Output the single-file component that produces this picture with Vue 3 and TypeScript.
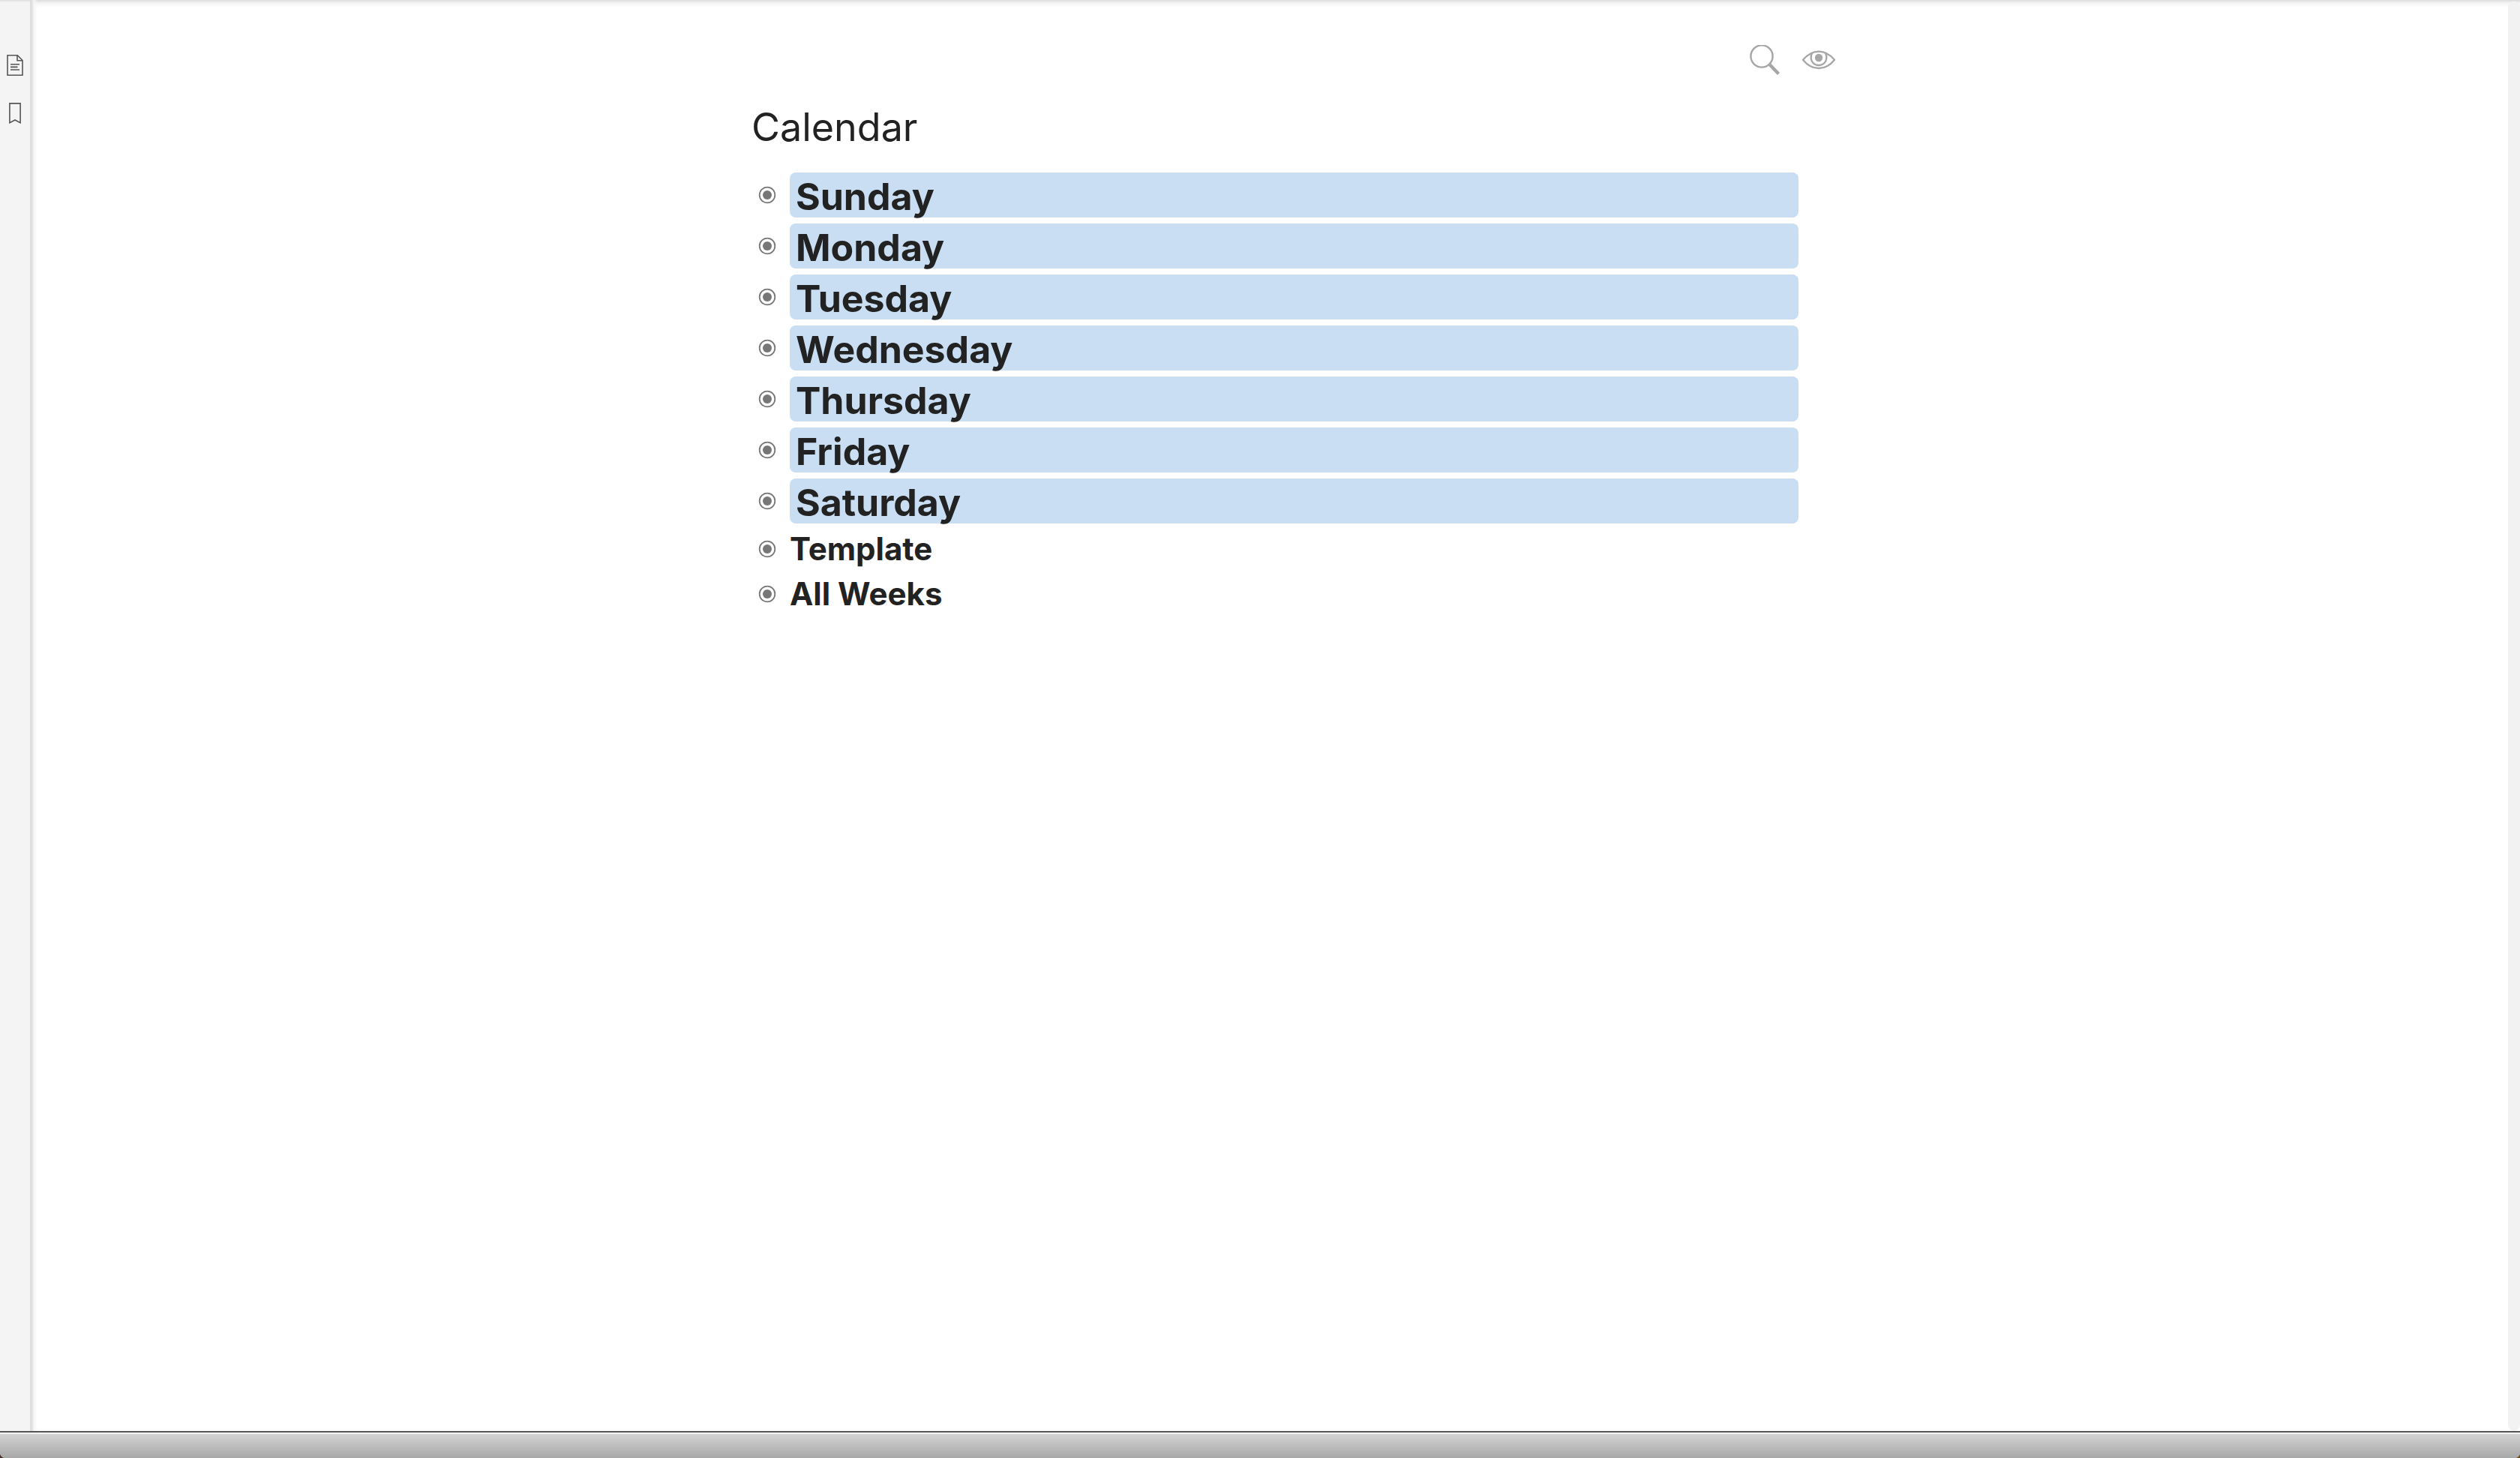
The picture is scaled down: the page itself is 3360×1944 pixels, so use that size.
<script setup lang="ts">
interface Item {
  name: string
  highlighted: boolean
}

const days = ['Sunday', 'Monday', 'Tuesday', 'Wednesday', 'Thursday', 'Friday', 'Saturday']
const items: Item[] = [
  ...days.map((name) => ({ name, highlighted: true })),
  { name: 'Template', highlighted: false },
  { name: 'All Weeks', highlighted: false },
]
</script>

<template>
  <div class="window">
    <div class="body">
      <nav class="sidebar">
        <button class="icon-button" type="button" aria-label="Documents">
          <svg width="24" height="30" viewBox="0 0 24 30" fill="none" stroke="#555" stroke-width="1.6">
            <path d="M2 1.8H15.3L22 8.5V28.2H2Z" />
            <path d="M15 2V8.8H22" />
            <path d="M6 13.8H18M6 17.4H15.5M6 21H18" />
          </svg>
        </button>
        <button class="icon-button" type="button" aria-label="Bookmarks">
          <svg width="18" height="30" viewBox="0 0 18 30" fill="none" stroke="#555" stroke-width="1.6">
            <path d="M1.9 1.9H16.1V27.6L9 24L1.9 27.6Z" />
          </svg>
        </button>
      </nav>
      <main class="page">
        <div class="toolbar">
          <button class="icon-button" type="button" aria-label="Search">
            <svg width="42" height="42" viewBox="0 0 42 42" fill="none" stroke="#a6a6a6">
              <circle cx="17" cy="15" r="14.6" stroke-width="2.4" />
              <path d="M27 25.5L39.5 38.5" stroke-width="4.4" />
            </svg>
          </button>
          <button class="icon-button" type="button" aria-label="Visibility">
            <svg width="46" height="42" viewBox="0 0 46 42" fill="none" stroke="#a6a6a6" stroke-width="2.3">
              <path d="M2 19.7C8 12.7 15 8.6 23 8.6S38 12.7 44 19.7C38 27.2 31 31 23 31S8 27.2 2 19.7Z" stroke-linejoin="round" />
              <path d="M14.3 10.4C11.5 15.4 12.4 20.9 15.5 24C19.5 28 26.5 28 30.5 24C33.6 20.9 34.5 15.4 31.7 10.4" />
              <circle cx="23" cy="17" r="5.2" fill="#a6a6a6" stroke="none" />
            </svg>
          </button>
        </div>
        <section class="content">
          <h1 class="title">Calendar</h1>
          <ul class="list">
            <li v-for="item in items" :key="item.name" class="row" :class="{ day: item.highlighted }">
              <a class="bullet" href="#" :aria-label="`Open ${item.name}`">
                <svg width="24" height="24" viewBox="0 0 24 24">
                  <circle cx="12" cy="12" r="10.3" fill="none" stroke="#777" stroke-width="1.8" />
                  <circle cx="12" cy="12" r="6" fill="#777" />
                </svg>
              </a>
              <span class="name">{{ item.name }}</span>
            </li>
          </ul>
        </section>
      </main>
      <div class="scrollbar"></div>
    </div>
    <footer class="status"></footer>
  </div>
</template>

<style>
body {
  margin: 0;
}
</style>

<style scoped>
.window {
  display: flex;
  flex-direction: column;
  min-height: 100vh;
  background: #fff;
  color: #222;
  font-family: Inter, "Liberation Sans", sans-serif;
}

.body {
  position: relative;
  display: flex;
  flex: 1;
  background: linear-gradient(#dcdcdc, #f4f4f4 4px, #fff 10px);
}

.sidebar {
  display: flex;
  flex-direction: column;
  align-items: center;
  gap: 34px;
  width: 40px;
  padding-top: 72px;
  box-sizing: border-box;
  background: linear-gradient(#dcdcdc, #f4f4f4 3px);
}

.icon-button {
  display: block;
  padding: 0;
  border: 0;
  background: none;
  cursor: pointer;
}

.icon-button svg,
.bullet svg {
  display: block;
}

.page {
  flex: 1;
  background: linear-gradient(to right, #dcdcdc, #e2e2e2 3px, #f6f6f6 5px, rgba(255, 255, 255, 0) 10px);
}

.toolbar {
  display: flex;
  justify-content: flex-end;
  gap: 28px;
  width: 1496px;
  max-width: 100%;
  margin: 0 auto;
  padding-top: 60px;
}

.content {
  width: 1396px;
  max-width: 100%;
  margin: 0 auto;
}

.title {
  margin: 0;
  padding: 36px 0 24px;
  font-size: 52px;
  font-weight: 400;
  line-height: 64px;
}

.list {
  margin: 0;
  padding: 0;
  list-style: none;
}

.row {
  display: flex;
  align-items: center;
  height: 60px;
  font-size: 42px;
  font-weight: 700;
  line-height: 60px;
}

.bullet {
  width: 42px;
  padding-left: 9px;
}

.name {
  flex: 1;
}

.day {
  height: 68px;
  font-size: 50px;
}

.day .name {
  height: 60px;
  box-sizing: border-box;
  padding: 2px 8px 0;
  border-radius: 8px;
  background: #c9def3;
}

/* The scrollbar floats over the page, so the column stays centred. */
.scrollbar {
  position: absolute;
  top: 2px;
  right: 0;
  bottom: 0;
  width: 16px;
  border-radius: 8px;
  background: #f2f2f2;
}

.status {
  height: 36px;
  box-sizing: border-box;
  border-top: 2px solid #555;
  background:
    radial-gradient(circle at 8px 0, transparent 8px, #47302c 9px) left bottom / 8px 8px no-repeat,
    radial-gradient(circle at 0 0, transparent 8px, #6e4a12 9px) right bottom / 8px 8px no-repeat,
    linear-gradient(#f2f2f2 2px, #d2d2d2 2px, #a8a8a8);
}
</style>
